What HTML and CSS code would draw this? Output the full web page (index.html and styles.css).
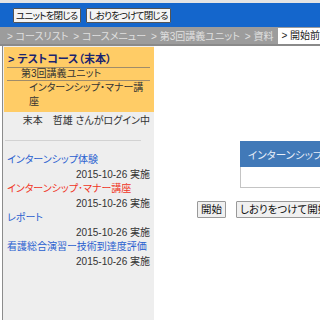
FILE: index.html
```html
<!DOCTYPE html>
<html lang="ja">
<head>
    <meta charset="UTF-8">
    <title>開始前の確認</title>
    <link rel="stylesheet" href="styles.css">
</head>
<body>
    <div class="topline"></div>
    <div class="toolbar">
        <button class="btn">ユニットを閉じる</button>
        <button class="btn">しおりをつけて閉じる</button>
    </div>
    <div class="crumbs">
        <span class="crumb">&gt; コースリスト</span>
        <span class="crumb">&gt; コースメニュー</span>
        <span class="crumb">&gt; 第3回講義ユニット</span>
        <span class="crumb">&gt; 資料</span>
        <span class="crumb current">&gt; 開始前の確認</span>
    </div>

    <div class="page">
        <div class="side">
            <div class="course-box">
                <div class="course-title">&gt; テストコース（末本）</div>
                <div class="unit-title">第3回講義ユニット</div>
                <div class="item-title">インターンシップ・マナー講座</div>
            </div>
            <div class="login">末本　哲雄 さんがログイン中</div>
            <div class="sep"></div>
            <ul class="items">
                <li><a href="#" class="link">インターンシップ体験</a><div class="date">2015-10-26 実施</div></li>
                <li><a href="#" class="link active">インターンシップ･マナー講座</a><div class="date">2015-10-26 実施</div></li>
                <li><a href="#" class="link">レポート</a><div class="date">2015-10-26 実施</div></li>
                <li><a href="#" class="link">看護総合演習ー技術到達度評価</a><div class="date">2015-10-26 実施</div></li>
            </ul>
        </div>

        <div class="main">
            <table class="info">
                <tr><th>インターンシップ・マナー講座</th></tr>
                <tr><td></td></tr>
            </table>
            <div class="actions">
                <button class="btn">開始</button>
                <button class="btn">しおりをつけて開始</button>
            </div>
        </div>
    </div>
</body>
</html>
```

FILE: styles.css
```css
html, body {
    margin: 0;
    overflow: hidden;
}
body {
    font-family: "Liberation Sans", "Noto Sans CJK JP", sans-serif;
    font-size: 10px;
    font-feature-settings: "palt";
    background-color: #fff;
    color: #333;
    width: 320px;
    height: 320px;
}
.topline {
    height: 3px;
    background-color: #e4e4e4;
}
.toolbar {
    background-color: #1466cc;
    height: 24px;
    padding-left: 13px;
    display: flex;
    align-items: center;
    gap: 5px;
    white-space: nowrap;
}
.btn {
    font-family: inherit;
    font-size: 9.5px;
    font-feature-settings: "palt";
    letter-spacing: -0.8px;
    line-height: 13px;
    padding: 0 2px;
    margin: 0;
    background-color: #f4f4f4;
    border: 1px solid #555;
    border-radius: 1px;
    color: #111;
}
.crumbs {
    background-color: #9c9c9c;
    height: 17px;
    border-bottom: 2px solid #8a8a8a;
    display: flex;
    align-items: center;
    padding-left: 7px;
    gap: 5px;
    white-space: nowrap;
    font-size: 10px;
    color: #e0e0e0;
}
.crumb.current {
    background-color: #fff;
    color: #222;
    padding: 1px 3px;
    line-height: 14px;
}
.page {
    display: flex;
    height: 274px;
}
.side {
    flex: 0 0 151px;
    width: 151px;
    min-width: 0;
    overflow: hidden;
    margin-left: 2px;
    border-left: 1px solid #8c8c8c;
    background-color: #eeeeee;
    padding-top: 1px;
}
.course-box {
    background-color: #ffcc66;
    margin-left: 1px;
    padding: 5px 4px 3px 3px;
}
.course-title {
    font-weight: bold;
    font-size: 11px;
    color: #1a2470;
    line-height: 15px;
    border-bottom: 1px solid #a08c6a;
    padding-left: 1px;
}
.unit-title {
    color: #333;
    line-height: 12px;
    border-bottom: 1px solid #a08c6a;
    padding-left: 14px;
}
.item-title {
    color: #333;
    line-height: 14px;
    padding: 0 2px 0 22px;
}
.login {
    text-align: right;
    padding: 2px 4px 0 0;
    line-height: 14px;
}
.sep {
    margin: 12px 13px 0 2px;
    border-top: 1px solid #d2d2d2;
}
.items {
    list-style: none;
    margin: 12px 0 0;
    padding: 0 4px 0 4px;
}
.link {
    display: block;
    color: #2a5fd0;
    text-decoration: none;
    line-height: 13px;
    white-space: nowrap;
}
.link.active {
    color: #f0341e;
}
.date {
    text-align: right;
    margin-top: 2px;
    line-height: 14px;
    color: #333;
}
.main {
    flex: 1;
    min-width: 0;
    padding-top: 95px;
    overflow: hidden;
}
.info {
    border-collapse: collapse;
    margin-left: 86px;
    width: 220px;
}
.info th {
    background-color: #4179b8;
    color: #e8eef8;
    font-weight: normal;
    font-size: 10.5px;
    text-align: left;
    height: 24px;
    padding: 0 0 0 7px;
    border: 1px solid #4179b8;
    white-space: nowrap;
}
.info td {
    height: 18px;
    border: 1px solid #c4c4c4;
    background-color: #fff;
}
.actions {
    margin: 13px 0 0 43px;
    display: flex;
    gap: 10px;
    white-space: nowrap;
}
.actions .btn {
    font-size: 10.5px;
    letter-spacing: 0;
    line-height: 15px;
    padding: 0 3px;
    border-color: #999;
    background-color: #f0f0f0;
}
```
